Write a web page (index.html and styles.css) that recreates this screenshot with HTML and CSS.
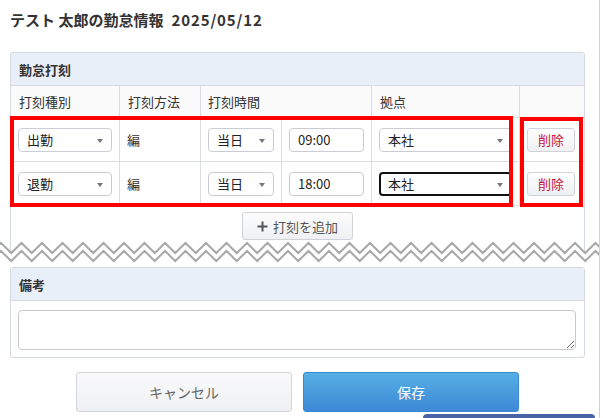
FILE: index.html
```html
<!DOCTYPE html>
<html lang="ja">
<head>
  <meta charset="UTF-8">
  <title>勤怠情報</title>
  <link rel="stylesheet" href="styles.css">
</head>
<body>
<div class="page">

  <h1 class="page-title">テスト 太郎の勤怠情報<span class="page-date">2025/05/12</span></h1>

  <!-- 勤怠打刻 -->
  <section class="card card-cut">
    <div class="card-head">勤怠打刻</div>

    <div class="punch-grid">
      <div class="th">打刻種別</div>
      <div class="th">打刻方法</div>
      <div class="th span-2">打刻時間</div>
      <div class="th">拠点</div>
      <div class="th"></div>

      <div class="td"><div class="select"><select><option>出勤</option><option>退勤</option></select></div></div>
      <div class="td">編</div>
      <div class="td"><div class="select"><select><option>当日</option><option>翌日</option></select></div></div>
      <div class="td"><input class="time" type="text" value="09:00"></div>
      <div class="td"><div class="select"><select><option>本社</option></select></div></div>
      <div class="td"><button class="btn-del">削除</button></div>

      <div class="td"><div class="select"><select><option>退勤</option><option>出勤</option></select></div></div>
      <div class="td">編</div>
      <div class="td"><div class="select"><select><option>当日</option><option>翌日</option></select></div></div>
      <div class="td"><input class="time" type="text" value="18:00"></div>
      <div class="td"><div class="select is-focus"><select><option>本社</option></select></div></div>
      <div class="td"><button class="btn-del">削除</button></div>
    </div>

    <div class="add-row">
      <button class="btn-add">
        <svg width="11" height="11" viewBox="0 0 11 11"><path d="M5.5 0.5v10M0.5 5.5h10" stroke="#555" stroke-width="2"/></svg>
        打刻を追加
      </button>
    </div>

    <!-- 注釈の赤枠 -->
    <div class="mark mark-rows"></div>
    <div class="mark mark-del"></div>
  </section>

  <!-- 省略のギザギザ -->
  <div class="tear">
    <svg width="599" height="24" viewBox="0 0 599 24">
      <path fill="#fff" d="M-9.25 13l10.25-10 10.25 10 10.25-10 10.25 10 10.25-10 10.25 10 10.25-10 10.25 10 10.25-10 10.25 10 10.25-10 10.25 10 10.25-10 10.25 10 10.25-10 10.25 10 10.25-10 10.25 10 10.25-10 10.25 10 10.25-10 10.25 10 10.25-10 10.25 10 10.25-10 10.25 10 10.25-10 10.25 10 10.25-10 10.25 10 10.25-10 10.25 10 10.25-10 10.25 10 10.25-10 10.25 10 10.25-10 10.25 10 10.25-10 10.25 10 10.25-10 10.25 10 10.25-10 10.25 10 10.25-10 10.25 10 10.25-10 10.25 10 10.25-10 10.25 10 10.25-10 10.25 10 10.25-10 10.25 10 10.25-10 10.25 10 10.25-10 10.25 10 10.25-10 10.25 10V24H-10z"/>
      <path fill="none" stroke="#a9a9a9" stroke-width="2" d="M-9.25 13l10.25-10 10.25 10 10.25-10 10.25 10 10.25-10 10.25 10 10.25-10 10.25 10 10.25-10 10.25 10 10.25-10 10.25 10 10.25-10 10.25 10 10.25-10 10.25 10 10.25-10 10.25 10 10.25-10 10.25 10 10.25-10 10.25 10 10.25-10 10.25 10 10.25-10 10.25 10 10.25-10 10.25 10 10.25-10 10.25 10 10.25-10 10.25 10 10.25-10 10.25 10 10.25-10 10.25 10 10.25-10 10.25 10 10.25-10 10.25 10 10.25-10 10.25 10 10.25-10 10.25 10 10.25-10 10.25 10 10.25-10 10.25 10 10.25-10 10.25 10 10.25-10 10.25 10 10.25-10 10.25 10 10.25-10 10.25 10 10.25-10 10.25 10 10.25-10 10.25 10"/>
      <path fill="none" stroke="#a9a9a9" stroke-width="2" d="M-9.25 21l10.25-10 10.25 10 10.25-10 10.25 10 10.25-10 10.25 10 10.25-10 10.25 10 10.25-10 10.25 10 10.25-10 10.25 10 10.25-10 10.25 10 10.25-10 10.25 10 10.25-10 10.25 10 10.25-10 10.25 10 10.25-10 10.25 10 10.25-10 10.25 10 10.25-10 10.25 10 10.25-10 10.25 10 10.25-10 10.25 10 10.25-10 10.25 10 10.25-10 10.25 10 10.25-10 10.25 10 10.25-10 10.25 10 10.25-10 10.25 10 10.25-10 10.25 10 10.25-10 10.25 10 10.25-10 10.25 10 10.25-10 10.25 10 10.25-10 10.25 10 10.25-10 10.25 10 10.25-10 10.25 10 10.25-10 10.25 10 10.25-10 10.25 10 10.25-10 10.25 10"/>
    </svg>
  </div>

  <!-- 備考 -->
  <section class="card">
    <div class="card-head">備考</div>
    <div class="card-body">
      <textarea class="memo"></textarea>
    </div>
  </section>

  <div class="actions">
    <button class="btn-cancel">キャンセル</button>
    <button class="btn-save">保存</button>
  </div>

  <div class="dock"></div>
</div>
</body>
</html>
```

FILE: styles.css
```css
body {
  margin: 0;
  background: #fff;
  color: #333;
  font-family: "Noto Sans CJK JP", "Noto Sans", sans-serif;
  font-size: 13px;
}

.page {
  position: relative;
  width: 600px;
  min-height: 100vh;
  box-sizing: border-box;
  border-right: 1px solid #d0d0d0;
  overflow: hidden;
}

.page-title {
  margin: 0;
  padding: 10px 10px 0;
  line-height: 20px;
  font-size: 15px;
  font-weight: bold;
  color: #333;
}

.page-date {
  margin-left: 8px;
  letter-spacing: 0.9px;
}

/* カード */
.card {
  position: relative;
  margin: 22px 14px 0 10px;
  border: 1px solid #d5d9e0;
  border-radius: 3px;
  background: #fff;
}

.card-cut {
  border-bottom: none;
  border-radius: 3px 3px 0 0;
  padding-bottom: 12px;
}

.card-head {
  height: 33px;
  box-sizing: border-box;
  display: flex;
  align-items: center;
  padding: 0 8px;
  background: #e9eff9;
  border-bottom: 1px solid #d5d9e0;
  font-weight: bold;
}

.card-body {
  padding: 9px 8px 7px 7px;
}

/* 打刻テーブル */
.punch-grid {
  display: grid;
  grid-template-columns: 108px 81px 81px 90px 148px 65px;
}

.th, .td {
  box-sizing: border-box;
  display: flex;
  align-items: center;
  padding: 0 7px;
  border-bottom: 1px solid #dadde2;
  border-left: 1px solid #dadde2;
}

.th:nth-child(1),
.td:nth-child(6n+6) {
  border-left: none;
}

.th {
  height: 32px;
  padding-left: 8px;
  background: #fafafa;
}

.th.span-2 {
  grid-column: span 2;
  padding-left: 7px;
}

.td {
  height: 44px;
}

.select {
  position: relative;
  width: 100%;
}

.select::after {
  content: "";
  position: absolute;
  right: 9px;
  top: 11px;
  border-left: 3.5px solid transparent;
  border-right: 3.5px solid transparent;
  border-top: 4px solid #777;
  pointer-events: none;
}

.select select {
  appearance: none;
  -webkit-appearance: none;
  width: 100%;
  height: 24px;
  box-sizing: border-box;
  padding: 0 8px;
  border: 1px solid #c9cdd3;
  border-radius: 4px;
  background: #fff;
  color: #222;
  font-family: inherit;
  font-size: 13px;
}

.select.is-focus select {
  border: 2px solid #111;
  padding-left: 7px;
}

.time {
  width: 100%;
  height: 24px;
  box-sizing: border-box;
  padding: 0 8px;
  border: 1px solid #c9cdd3;
  border-radius: 4px;
  color: #222;
  font-family: inherit;
  font-size: 13px;
}

.btn-del {
  height: 24px;
  padding: 0 10px;
  border: 1px solid #d0d4da;
  border-radius: 3px;
  background: linear-gradient(#fff, #eef0f2);
  color: #c8143c;
  font-family: inherit;
  font-size: 13px;
}

.add-row {
  display: flex;
  justify-content: center;
  padding-top: 6px;
}

.btn-add {
  display: flex;
  align-items: center;
  gap: 5px;
  height: 28px;
  padding: 0 14px 0 14px;
  border: 1px solid #cfd3d8;
  border-radius: 3px;
  background: linear-gradient(#fdfdfd, #eef0f3);
  color: #555;
  font-family: inherit;
  font-size: 13px;
}

/* 注釈の赤枠 */
.mark {
  position: absolute;
  border: 4px solid #f00;
  box-sizing: border-box;
}

.mark-rows {
  left: -1px;
  top: 63px;
  width: 503px;
  height: 91px;
}

.mark-del {
  left: 509px;
  top: 64px;
  width: 63px;
  height: 90px;
}

/* ギザギザ */
.tear {
  position: relative;
  height: 24px;
  margin: -12px 0 3px;
}

.tear svg {
  display: block;
}

.tear + .card {
  margin-top: 0;
}

.memo {
  display: block;
  width: 100%;
  height: 40px;
  box-sizing: border-box;
  border: 1px solid #c5c9cf;
  border-radius: 4px;
  font-family: inherit;
  font-size: 13px;
}

/* ボタン */
.actions {
  display: flex;
  justify-content: center;
  gap: 11px;
  margin: 14px 14px 0 10px;
}

.actions button {
  width: 216px;
  height: 40px;
  border-radius: 3px;
  font-family: inherit;
  font-size: 14px;
}

.btn-cancel {
  border: 1px solid #d2d5da;
  background: linear-gradient(#fafafb, #eef0f2);
  color: #666;
}

.btn-save {
  border: 1px solid #3c88d4;
  background: linear-gradient(#56b0e3, #3d88d7);
  color: #fff;
}

.dock {
  position: absolute;
  left: 423px;
  top: 414px;
  width: 172px;
  height: 12px;
  border-radius: 4px 4px 0 0;
  background: #4a63a6;
}
```
